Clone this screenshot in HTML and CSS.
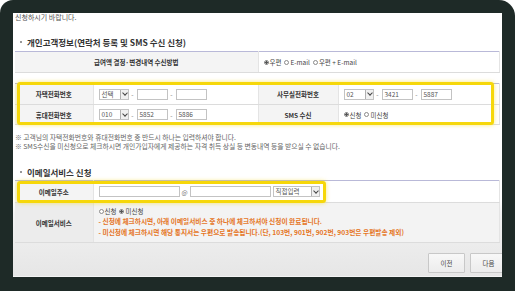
FILE: index.html
```html
<!DOCTYPE html>
<html>
  <head>
    <title>연락처 등록</title>
    <link rel="stylesheet" href="styles.css">
  </head>
  <body>
    <div class="frame">
      <div class="screen">
        <p class="intro">신청하시기 바랍니다.</p>

        <h2 class="title"><span class="dot"></span>개인고객정보(연락처 등록 및 SMS 수신 신청)</h2>
        <table class="form form-main">
          <colgroup><col class="c1"><col class="c2"><col class="c3"><col></colgroup>
          <tr>
            <th colspan="2">급여액 결정·변경내역 수신방법</th>
            <td colspan="2">
              <div class="line">
                <span class="radio on"></span>우편
                <span class="radio"></span>E-mail
                <span class="radio"></span>우편 + E-mail
              </div>
            </td>
          </tr>
        </table>

        <div class="marked">
          <table class="form form-phone">
            <colgroup><col class="c1"><col class="c2"><col class="c3"><col></colgroup>
            <tr class="r-top">
              <th>자택전화번호</th>
              <td>
                <div class="line">
                  <span class="select"><span class="val">선택</span><span class="arrow"></span></span>
                  <span class="dash">-</span>
                  <span class="field"></span>
                  <span class="dash">-</span>
                  <span class="field"></span>
                </div>
              </td>
              <th>사무실전화번호</th>
              <td>
                <div class="line">
                  <span class="select"><span class="val">02</span><span class="arrow"></span></span>
                  <span class="dash">-</span>
                  <span class="field">3421</span>
                  <span class="dash">-</span>
                  <span class="field">5887</span>
                </div>
              </td>
            </tr>
            <tr>
              <th>휴대전화번호</th>
              <td>
                <div class="line">
                  <span class="select"><span class="val">010</span><span class="arrow"></span></span>
                  <span class="dash">-</span>
                  <span class="field">5852</span>
                  <span class="dash">-</span>
                  <span class="field">5886</span>
                </div>
              </td>
              <th>SMS 수신</th>
              <td>
                <div class="line">
                  <span class="radio on"></span>신청
                  <span class="radio"></span>미신청
                </div>
              </td>
            </tr>
          </table>
          <div class="highlight hl-phone"></div>
        </div>

        <p class="note">※ 고객님의 자택전화번호와 휴대전화번호 중 반드시 하나는 입력하셔야 합니다.<br>※ SMS수신을 미신청으로 체크하시면 개인가입자에게 제공하는 자격 취득 상실 등 변동내역 등을 받으실 수 없습니다.</p>

        <h2 class="title title-mail"><span class="dot"></span>이메일서비스 신청</h2>
        <div class="marked">
          <table class="form form-mail">
            <colgroup><col class="c1"><col></colgroup>
            <tr class="r-addr">
              <th>이메일주소</th>
              <td>
                <div class="line">
                  <span class="field wide"></span>
                  <span class="at">@</span>
                  <span class="field wide"></span>
                  <span class="select domain"><span class="val">직접입력</span><span class="arrow"></span></span>
                </div>
              </td>
            </tr>
            <tr class="r-service">
              <th>이메일서비스</th>
              <td>
                <div class="line">
                  <span class="radio"></span>신청
                  <span class="radio on"></span>미신청
                </div>
                <p class="warn">- 신청에 체크하시면, 아래 이메일서비스 중 하나에 체크하셔야 신청이 완료됩니다.</p>
                <p class="warn">- 미신청에 체크하시면 해당 통지서는 우편으로 발송됩니다.(단, 103번, 901번, 902번, 903번은 우편발송 제외)</p>
              </td>
            </tr>
          </table>
          <div class="highlight hl-mail"></div>
        </div>

        <div class="footer">
          <button class="btn">이전</button>
          <button class="btn">다음</button>
        </div>
      </div>
    </div>
  </body>
</html>
```

FILE: styles.css
```css
/* Page and video frame */
* {
  box-sizing: border-box;
}

body {
  margin: 0;
  background-color: #ffffff;
  font-family: "Noto Sans CJK KR", "Noto Sans", sans-serif;
}

.frame {
  width: 515px;
  height: 291px;
  padding: 13px 13px 14px 13px;
  background-color: #1e2a27;
  border-radius: 13px 16px 0 0;
}

/* White page inside the frame */
.screen {
  height: 264px;
  padding: 0 2px;
  overflow: hidden;
  display: flex;
  flex-direction: column;
  background: linear-gradient(#ffffff 0, #ffffff 188px, #f2f2f2 200px, #e6e6e6 264px);
  border-bottom: 1px solid #f4f4f4;
}

.intro {
  margin: 0;
  font-size: 7px;
  line-height: 9px;
  color: #555555;
}

/* Section headings */
.title {
  margin: 15px 0 4px;
  display: flex;
  align-items: center;
  font-size: 8.5px;
  line-height: 10px;
  font-weight: 700;
  color: #333333;
}

.title-mail {
  margin: 16px 0 3px;
}

.dot {
  width: 2px;
  height: 2px;
  margin: 0 5px 0 5px;
  border-radius: 50%;
  background-color: #777777;
}

/* Form tables */
.form {
  width: 100%;
  border-collapse: collapse;
  border-top: 1px solid #b9b9d8;
  font-size: 6.5px;
  color: #444444;
  table-layout: fixed;
}

.c1 {
  width: 78px;
}

.c2 {
  width: 165px;
}

.c3 {
  width: 80px;
}

.form th {
  padding: 0;
  background-color: #f4f4f4;
  border-bottom: 1px solid #dcdcdc;
  border-right: 1px solid #e4e4e4;
  font-weight: 700;
  color: #333333;
  text-align: center;
}

.form td {
  padding: 0 0 0 5px;
  border-bottom: 1px solid #dcdcdc;
  border-right: 1px solid #e4e4e4;
}

.form-main tr {
  height: 21px;
}

.form-phone tr {
  height: 20px;
}

.form-phone .r-top {
  height: 21px;
}

.form-mail .r-addr {
  height: 22px;
}

.form-mail .r-service {
  height: 40px;
}

.form-mail .r-service th {
  background-color: #ececec;
}

.form-mail .r-service td {
  padding-top: 3px;
  vertical-align: top;
  background-color: #f3f3f3;
}

/* Inline controls */
.line {
  display: flex;
  align-items: center;
  white-space: nowrap;
  line-height: 10px;
}

.radio {
  width: 5px;
  height: 5px;
  margin: 0 1px 0 3px;
  border: 1px solid #8a8a8a;
  border-radius: 50%;
  background-color: #ffffff;
}

.line .radio:first-child {
  margin-left: 0;
}

.radio.on {
  background: radial-gradient(circle, #555555 0, #555555 1px, #ffffff 1.5px);
}

.field {
  width: 31px;
  height: 11px;
  padding-left: 2px;
  border: 1px solid #c3c3c3;
  background-color: #ffffff;
  font-size: 6.5px;
  line-height: 9px;
  color: #555555;
}

.field.wide {
  width: 81px;
}

.select {
  width: 30px;
  height: 11px;
  display: flex;
  align-items: center;
  justify-content: space-between;
  padding-left: 2px;
  border: 1px solid #c3c3c3;
  background-color: #ffffff;
  line-height: 9px;
  color: #555555;
}

.select.domain {
  width: 47px;
  margin-left: 2px;
}

.arrow {
  width: 8px;
  height: 9px;
  border-left: 1px solid #b0b0b0;
  background-color: #f0f0f0;
  position: relative;
}

.arrow::after {
  content: "";
  position: absolute;
  left: 2px;
  top: 1.5px;
  width: 3px;
  height: 3px;
  border-right: 1px solid #444444;
  border-bottom: 1px solid #444444;
  transform: rotate(45deg);
}

.dash {
  width: 8px;
  text-align: center;
  color: #777777;
}

.at {
  width: 10px;
  text-align: center;
  color: #777777;
}

.warn {
  margin: 0;
  font-size: 6.7px;
  line-height: 11px;
  font-weight: 700;
  color: #e5751f;
  white-space: nowrap;
}

.note {
  margin: 8px 0 0;
  font-size: 6.8px;
  line-height: 9px;
  color: #666666;
  white-space: nowrap;
}

/* Yellow highlight boxes drawn over the form */
.marked {
  position: relative;
}

.form-phone {
  margin-top: 10px;
}

.highlight {
  position: absolute;
  border: 3px solid #f6d70a;
  border-radius: 3px;
  box-shadow: 0 0 4px rgba(246, 215, 10, 0.55);
}

.hl-phone {
  left: 2px;
  right: 6px;
  top: 9px;
  bottom: 0;
}

.hl-mail {
  left: 2px;
  top: 1px;
  width: 309px;
  height: 22px;
}

/* Bottom buttons */
.footer {
  flex: 1;
  display: flex;
  justify-content: flex-end;
  gap: 5px;
  margin-right: -7px;
  padding-top: 10px;
}

.btn {
  width: 37px;
  height: 20px;
  padding: 0;
  border: 1px solid #c8c8c8;
  border-radius: 1px;
  background: linear-gradient(#f8f8f8, #ececec);
  font-family: "Noto Sans CJK KR", "Noto Sans", sans-serif;
  font-size: 6.5px;
  color: #444444;
}
```
